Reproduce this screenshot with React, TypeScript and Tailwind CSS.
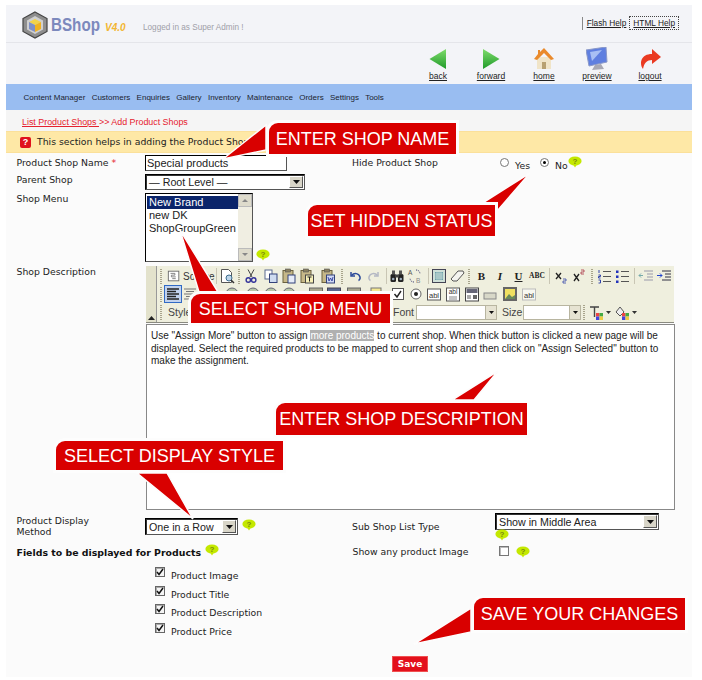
import React from "react";

const verdana = "font-['DejaVu_Sans',sans-serif]";
const arial = "font-['Liberation_Sans',Arial,sans-serif]";

function Help({ className = "" }: { className?: string }) {
  return (
    <svg width="14" height="12" viewBox="0 0 14 12" className={"shrink-0 " + className}>
      <ellipse cx="7" cy="5" rx="6.6" ry="4.6" fill="#c4e800" />
      <path d="M5 8.5 L7 11.5 L9 8.5 Z" fill="#c4e800" />
      <text x="7" y="8" fontSize="8" fontWeight="700" textAnchor="middle" fill="#7a8a10" fontFamily="Liberation Sans">?</text>
    </svg>
  );
}

function Arrow() {
  return (
    <svg width="7" height="4" viewBox="0 0 7 4">
      <path d="M0 0H7L3.5 4Z" fill="#111" />
    </svg>
  );
}

function Drop({ className = "" }: { className?: string }) {
  return (
    <span className={"flex items-center justify-center w-[14px] self-stretch m-[1px] bg-[#d8d5c8] border-t border-l border-white border-r border-b border-r-[#555] border-b-[#555] " + className}>
      <Arrow />
    </span>
  );
}

function Sel({ text, className }: { text: string; className: string }) {
  return (
    <div className={`${arial} flex items-stretch justify-between bg-white border border-t-black border-l-black border-r-[#555] border-b-[#555] shadow-[inset_1px_1px_0_#333] text-[10.7px] leading-[14px] text-[#222] ${className}`}>
      <span className="pl-[3px] self-center whitespace-nowrap">{text}</span>
      <Drop />
    </div>
  );
}

function Label({ children, className = "" }: { children: React.ReactNode; className?: string }) {
  return <div className={`${verdana} text-[9.3px] leading-[11px] text-[#222] ${className}`}>{children}</div>;
}

function Grip({ w = "w-[5px]" }: { w?: string }) {
  return (
    <span className={`${w} flex justify-center shrink-0`}>
      <span className="block w-[2px] h-[15px] bg-[repeating-linear-gradient(to_bottom,#a8a48c_0,#a8a48c_1px,transparent_1px,transparent_2px)]" />
    </span>
  );
}

function Sep({ w = "w-[6px]" }: { w?: string }) {
  return (
    <span className={`${w} flex justify-center shrink-0`}>
      <span className="block w-[1px] h-[16px] bg-[#c9c6b4]" />
    </span>
  );
}

type Kind =
  | "source" | "preview" | "cut" | "copy" | "paste" | "pasteT" | "pasteW" | "undo" | "redo" | "find" | "replace"
  | "all" | "erase" | "sub" | "sup" | "ol" | "ul" | "out" | "in" | "left" | "center" | "box" | "boxBlue" | "check"
  | "radio" | "abl" | "abl2" | "sel" | "btn" | "img" | "abl3" | "doc" | "globe";

function Glyph({ k }: { k: Kind }) {
  const board = (
    <>
      <rect x="2" y="2.5" width="10" height="12" fill="#c6b888" stroke="#6b6240" />
      <rect x="4.5" y="1" width="5" height="3" fill="#8a8060" stroke="#555" strokeWidth=".6" />
    </>
  );
  switch (k) {
    case "source":
      return <><rect x="1.5" y="2.5" width="12" height="11" fill="#fff" stroke="#666" /><path d="M4 5h5v2H5v2h5M6 11h4" stroke="#777" fill="none" /></>;
    case "preview":
      return <><path d="M2.5 1.5h7l3 3v10h-10z" fill="#fff" stroke="#555" /><circle cx="10" cy="10" r="3" fill="#bcd4e8" stroke="#3c6c8c" /><path d="M12 12l3 3" stroke="#333" strokeWidth="1.5" /></>;
    case "cut":
      return <><path d="M5 1.5L9 9M11 1.5L7 9" stroke="#444" fill="none" /><circle cx="5.3" cy="12" r="2.2" fill="none" stroke="#33339a" strokeWidth="1.4" /><circle cx="10.7" cy="12" r="2.2" fill="none" stroke="#33339a" strokeWidth="1.4" /></>;
    case "copy":
      return <><rect x="2" y="2" width="7" height="9" fill="#fff" stroke="#5a6a90" /><rect x="6.5" y="6" width="7.5" height="8.5" fill="#cfdcf0" stroke="#33427a" /></>;
    case "paste":
      return <>{board}<rect x="7" y="7" width="7" height="8" fill="#e6ecf8" stroke="#33427a" /></>;
    case "pasteT":
      return <>{board}<rect x="6.5" y="7" width="8" height="8" fill="#f6f0b8" stroke="#444" /><path d="M8.5 9h4M10.5 9v4.5" stroke="#222" /></>;
    case "pasteW":
      return <>{board}<rect x="6.5" y="7" width="8" height="8" fill="#cfd8f4" stroke="#33427a" /><path d="M8 9l1 4 1.5-3 1.5 3 1-4" stroke="#2a3a9a" fill="none" strokeWidth=".9" /></>;
    case "undo":
      return <><path d="M4 4v4h4" stroke="#2b4a9a" fill="none" strokeWidth="1.5" /><path d="M4.5 7.5C7 4.5 12 5 13 9c.3 1.5-.5 3-1.5 3.5" stroke="#2b4a9a" fill="none" strokeWidth="1.5" /></>;
    case "redo":
      return <><path d="M12 4v4H8" stroke="#b4b8c4" fill="none" strokeWidth="1.5" /><path d="M11.5 7.5C9 4.5 4 5 3 9c-.3 1.5.5 3 1.5 3.5" stroke="#b4b8c4" fill="none" strokeWidth="1.5" /></>;
    case "find":
      return <><rect x="1.5" y="6" width="5.5" height="8" rx="1.5" fill="#222" /><rect x="9" y="6" width="5.5" height="8" rx="1.5" fill="#222" /><rect x="3" y="2.5" width="3" height="4" fill="#555" /><rect x="10" y="2.5" width="3" height="4" fill="#555" /><rect x="6" y="6.5" width="4" height="3" fill="#444" /><circle cx="4.2" cy="11" r="1.3" fill="#9ab" /><circle cx="11.8" cy="11" r="1.3" fill="#9ab" /></>;
    case "replace":
      return <><text x="1" y="7" fontSize="6.5" fontFamily="Liberation Sans" fill="#555">A</text><text x="9" y="14.5" fontSize="6.5" fontFamily="Liberation Sans" fill="#888">B</text><path d="M9 2c3 0 4 2 4 4M7 14c-3 0-4-2-4-4" stroke="#447" fill="none" strokeDasharray="1 1" /></>;
    case "all":
      return <><rect x="1.5" y="1.5" width="13" height="13" fill="#cfe0d8" stroke="#445" /><path d="M4 4h8v8H4z" fill="#6aa0a8" /><path d="M4 6h8M4 8h8M4 10h8M6 4v8M8 4v8M10 4v8" stroke="#e8f0e8" strokeWidth=".6" /></>;
    case "erase":
      return <path d="M2 11l7-8h5l1 2-7 8H4z" fill="#f4f4f0" stroke="#555" />;
    case "sub":
      return <><path d="M3 5l5 6M8 5l-5 6" stroke="#222" strokeWidth="1.3" /><path d="M10 11h3v2h-3v2h3" stroke="#3344aa" fill="none" strokeWidth=".8" /></>;
    case "sup":
      return <><path d="M3 6l5 7M8 6l-5 7" stroke="#222" strokeWidth="1.3" /><path d="M10 2h3v2h-3v2h3" stroke="#aa3344" fill="none" strokeWidth=".8" /></>;
    case "ol":
      return <><path d="M3 2v3M2.5 7h2v1.5h-2V10h2M2.5 12h2v3h-2" stroke="#3344aa" fill="none" /><path d="M7 3.5h8M7 8.5h8M7 13.5h8" stroke="#555" strokeWidth="1.2" /></>;
    case "ul":
      return <><rect x="2" y="2.5" width="2.5" height="2.5" fill="#2233bb" /><rect x="2" y="7.5" width="2.5" height="2.5" fill="#2233bb" /><rect x="2" y="12.5" width="2.5" height="2.5" fill="#2233bb" /><path d="M7 3.5h8M7 8.5h8M7 13.5h8" stroke="#555" strokeWidth="1.2" /></>;
    case "out":
      return <><path d="M6 3h9M9 6h6M9 9h6M6 12h9" stroke="#99a" /><path d="M1 7.5h4M3 5.5l-2 2 2 2" stroke="#7aa" fill="none" /></>;
    case "in":
      return <><path d="M6 3h9M9 6h6M9 9h6M6 12h9" stroke="#334" /><path d="M1 7.5h5M4 5.5l2 2-2 2" stroke="#24c" fill="none" /></>;
    case "left":
      return <path d="M2 3h12M2 5.5h9M2 8h12M2 10.5h9M2 13h12" stroke="#222" strokeWidth="1.4" />;
    case "center":
      return <path d="M2 3h12M4 5.5h8M2 8h12M4 10.5h8M2 13h12" stroke="#777" strokeWidth="1.2" />;
    case "box":
      return <rect x="1.5" y="2" width="13" height="13" fill="#a8a890" stroke="#666" />;
    case "boxBlue":
      return <rect x="1.5" y="2" width="13" height="13" fill="#5a6890" stroke="#445" />;
    case "doc":
      return <rect x="3" y="2" width="10" height="13" fill="#f4e890" stroke="#777" />;
    case "globe":
      return <circle cx="8" cy="8" r="6" fill="#b8c8a8" stroke="#667" />;
    case "check":
      return <><rect x="2.5" y="2.5" width="11" height="11" fill="#fff" stroke="#555" /><path d="M4.5 8l2.5 3 4-6" stroke="#222" fill="none" strokeWidth="1.4" /></>;
    case "radio":
      return <><circle cx="8" cy="8" r="5" fill="#fff" stroke="#666" /><circle cx="8" cy="8" r="2" fill="#222" /></>;
    case "abl":
    case "abl3":
      return <><rect x="1.5" y="3" width="13" height="11" fill={k === "abl" ? "#fff" : "#f8f8f0"} stroke={k === "abl" ? "#555" : "#bbb"} /><text x="8" y="12" fontSize="7.5" textAnchor="middle" fontFamily="Liberation Sans" fill="#333">abl</text></>;
    case "abl2":
      return <><rect x="1.5" y="2" width="13" height="13" fill="#fff" stroke="#555" /><text x="8" y="8" fontSize="6.5" textAnchor="middle" fontFamily="Liberation Sans" fill="#333">abl</text><path d="M4 11h8M4 13h8" stroke="#888" /></>;
    case "sel":
      return <><rect x="1.5" y="2" width="13" height="13" fill="#fff" stroke="#444" /><rect x="2.5" y="3" width="11" height="4" fill="#667" /><rect x="3" y="9" width="4" height="4" fill="#aaa" /><rect x="9" y="9" width="4" height="4" fill="#666" /></>;
    case "btn":
      return <rect x="2" y="7" width="12" height="6" fill="#d8d8c8" stroke="#888" />;
    case "img":
      return <><rect x="1" y="1" width="14" height="14" fill="#666" /><rect x="3" y="3" width="10" height="10" fill="#f0e060" /><path d="M3 13l4-5 3 3 3-2v4z" fill="#6a8a5a" /></>;
  }
}

function Tb({ k, w = "w-[18px]", className = "" }: { k: Kind; w?: string; className?: string }) {
  return (
    <span className={`${w} flex justify-center shrink-0 ${className}`}>
      <svg width="16" height="16" viewBox="0 0 16 16">
        <Glyph k={k} />
      </svg>
    </span>
  );
}

function Fmt({ children, w, className = "text-[11px]" }: { children: React.ReactNode; w: string; className?: string }) {
  return (
    <span className={`${w} flex justify-center shrink-0 font-['Liberation_Serif',serif] font-bold text-[#222] ${className}`}>
      {children}
    </span>
  );
}

function Combo({ w }: { w: string }) {
  return (
    <span className={`${w} h-[15px] flex justify-between bg-white border border-[#b8b5a0] shrink-0`}>
      <span />
      <span className="w-[11px] bg-[#e6e3d2] border-l border-[#b8b5a0] flex items-center justify-center">
        <svg width="5" height="3" viewBox="0 0 5 3"><path d="M0 0h5L2.5 3z" fill="#111" /></svg>
      </span>
    </span>
  );
}

function Toolbar() {
  return (
    <div className="flex bg-[#efefde] h-[57px] w-[528px] border-b border-[#8a8a80]">
      <div className="w-[11px] shrink-0 bg-[#e3e2cc] border-r border-[#999] flex flex-col justify-end items-center pb-[2px]">
        <svg width="7" height="4" viewBox="0 0 7 4"><path d="M0 4h7L3.5 0z" fill="#222" /></svg>
      </div>
      <div className="flex flex-col flex-1 pl-[1px]">
        <div className="flex items-center h-[19px] pt-[1px]">
          <Grip />
          <span className="w-[51px] flex items-center pl-[4px] shrink-0 gap-[2px]">
            <Tb k="source" w="w-[14px]" />
            <span className={`${arial} text-[10px] text-[#333]`}>Source</span>
          </span>
          <Sep w="w-[4px]" />
          <Tb k="preview" />
          <Grip />
          <Tb k="cut" w="w-[20px]" />
          <Tb k="copy" w="w-[19px]" />
          <Tb k="paste" w="w-[17px]" />
          <Tb k="pasteT" w="w-[20px]" />
          <Tb k="pasteW" w="w-[21px]" />
          <Grip w="w-[7px]" />
          <Tb k="undo" w="w-[20px]" />
          <Tb k="redo" />
          <Sep />
          <Tb k="find" w="w-[16px]" />
          <Tb k="replace" w="w-[20px]" />
          <Sep />
          <Tb k="all" w="w-[16px]" />
          <Tb k="erase" w="w-[19px]" />
          <Grip w="w-[6px]" />
          <Fmt w="w-[19px]">B</Fmt>
          <Fmt w="w-[18px]" className="text-[11px] italic">I</Fmt>
          <Fmt w="w-[19px]" className="text-[11px] underline">U</Fmt>
          <Fmt w="w-[18px]" className="text-[7.5px] whitespace-nowrap">ABC</Fmt>
          <Sep />
          <Tb k="sub" />
          <Tb k="sup" />
          <Grip w="w-[7px]" />
          <Tb k="ol" />
          <Tb k="ul" />
          <Sep />
          <Tb k="out" w="w-[17px]" />
          <Tb k="in" w="w-[20px]" />
        </div>
        <div className="flex items-center h-[18px]">
          <Grip />
          <span className="w-[18px] h-[18px] ml-[1px] flex items-center justify-center bg-[#c1d2ee] border border-[#316ac5] shrink-0">
            <svg width="16" height="16" viewBox="0 0 16 16"><Glyph k="left" /></svg>
          </span>
          <Tb k="center" w="w-[16px]" />
          <Tb k="globe" className="ml-[25px]" />
          <Tb k="globe" className="ml-[3px]" />
          <Tb k="globe" />
          <Tb k="globe" />
          <Tb k="box" className="ml-[9px]" />
          <Tb k="boxBlue" />
          <Tb k="box" className="ml-[2px]" />
          <Tb k="doc" className="ml-[4px]" />
          <Tb k="check" className="ml-[4px]" />
          <Tb k="radio" />
          <Tb k="abl" />
          <Tb k="abl2" w="w-[19px]" />
          <Tb k="sel" w="w-[19px]" />
          <Tb k="btn" />
          <Tb k="img" w="w-[21px]" />
          <Tb k="abl3" />
        </div>
        <div className={`${arial} flex items-center h-[19px] text-[10.5px] text-[#444]`}>
          <Grip />
          <span className="ml-[5px] w-[225px] shrink-0">Style</span>
          <span className="w-[23px] shrink-0">Font</span>
          <Combo w="w-[81px]" />
          <span className="w-[26px] pl-[5px] shrink-0">Size</span>
          <Combo w="w-[58px]" />
          <Grip />
          <span className="ml-[3px] w-[25px] shrink-0 flex items-center gap-[1px]">
            <svg width="16" height="16" viewBox="0 0 16 16">
              <path d="M1 2h9M5.5 2v10" stroke="#444" strokeWidth="1.4" />
              <rect x="7" y="8" width="3.5" height="3.5" fill="#e44" /><rect x="10.5" y="8" width="3.5" height="3.5" fill="#4a4" /><rect x="7" y="11.5" width="3.5" height="3.5" fill="#44d" /><rect x="10.5" y="11.5" width="3.5" height="3.5" fill="#ec4" />
            </svg>
            <svg width="5" height="3" viewBox="0 0 5 3"><path d="M0 0h5L2.5 3z" fill="#333" /></svg>
          </span>
          <span className="w-[27px] shrink-0 flex items-center gap-[1px]">
            <svg width="17" height="16" viewBox="0 0 17 16">
              <path d="M2 7l4-5 4 5-4 4z" fill="#eee" stroke="#555" />
              <rect x="8" y="8" width="3.5" height="3.5" fill="#e44" /><rect x="11.5" y="8" width="3.5" height="3.5" fill="#4a4" /><rect x="8" y="11.5" width="3.5" height="3.5" fill="#44d" /><rect x="11.5" y="11.5" width="3.5" height="3.5" fill="#ec4" />
            </svg>
            <svg width="5" height="3" viewBox="0 0 5 3"><path d="M0 0h5L2.5 3z" fill="#333" /></svg>
          </span>
        </div>
      </div>
    </div>
  );
}

function Nav({ label, children }: { label: string; children: React.ReactNode }) {
  return (
    <div className="flex flex-col items-center w-[53px]">
      <div className="h-[25px] flex items-center justify-center">{children}</div>
      <a className={`${arial} mt-[0px] text-[8.5px] leading-[11px] text-[#222] underline`}>{label}</a>
    </div>
  );
}

function Callout({ text, className }: { text: string; className: string }) {
  return (
    <div className={`${arial} absolute flex items-center justify-center bg-[#d90000] text-white text-[18px] leading-none whitespace-nowrap rounded-tl-[9px] ring-[3px] ring-[#fdfdfd] ${className}`}>
      {text}
    </div>
  );
}

function Check({ label }: { label: string }) {
  return (
    <div className="flex h-[18.7px] items-start">
      <span className="w-[10px] h-[10px] mt-[0px] border border-[#666] bg-[#f4f4f4] shadow-[inset_1px_1px_0_#aaa] flex items-center justify-center">
        <svg width="8" height="8" viewBox="0 0 8 8"><path d="M1 4l2 2.5L7 1" stroke="#111" strokeWidth="1.5" fill="none" /></svg>
      </span>
      <Label className="ml-[6px] mt-[3px]">{label}</Label>
    </div>
  );
}

export default function App() {
  return (
    <div className="relative w-[702px] h-[680px] bg-white overflow-hidden">
      <div className="pt-[5px] pl-[6px]">
        <div className="w-[686px] h-[672px] bg-[#fbfbfb] flex flex-col">
          {/* header */}
          <div className="h-[38px] bg-[#f3f4f8] border-b border-[#e4e5ea] flex items-start shrink-0">
            <svg width="26" height="28" viewBox="0 0 26 28" className="ml-[15.5px] mt-[5.5px] shrink-0">
              <path d="M13 1L25 7.5V20.5L13 27L1 20.5V7.5Z" fill="#8e8e8e" stroke="#444" strokeWidth="1.2" />
              <path d="M13 5L21 9.5V18.5L13 23L5 18.5V9.5Z" fill="#d0d0d0" />
              <path d="M13 8L19 11L13 14L7 11Z" fill="#f3d24a" />
              <path d="M7 11L13 14V21L7 18Z" fill="#7f90c8" />
              <path d="M19 11L13 14V21L19 18Z" fill="#f1b220" />
            </svg>
            <span className={`${arial} ml-[3px] mt-[9px] w-[50px] whitespace-nowrap text-[19px] leading-[22px] font-bold text-[#7c89bd] scale-x-[0.8] origin-left`}>BShop</span>
            <span className={`${arial} ml-[4.5px] mt-[16px] w-[20px] whitespace-nowrap text-[10px] leading-[13px] font-bold italic text-[#f2b632]`}>V4.0</span>
            <span className={`${arial} ml-[18px] mt-[17px] text-[8.2px] leading-[12px] text-[#a0a0a8]`}>Logged in as Super Admin !</span>
            <div className={`${arial} ml-auto mr-[13px] mt-[11px] flex items-center text-[8.3px] leading-[12px] text-[#222]`}>
              <span className="border-l border-[#888] pl-[4px] h-[13px] underline">Flash Help</span>
              <span className="ml-[3px] px-[3px] h-[14px] border border-dotted border-[#444] underline">HTML Help</span>
            </div>
          </div>
          {/* nav icons */}
          <div className="h-[41px] bg-[#f3f4f8] flex items-start justify-end pr-[15.5px] pt-[3px] shrink-0">
            <Nav label="back">
              <svg width="18" height="22" viewBox="0 0 18 22">
                <defs><linearGradient id="gb" x1="0" y1="0" x2="0" y2="1"><stop offset="0" stopColor="#7fdc6c" /><stop offset="1" stopColor="#1f9a2a" /></linearGradient></defs>
                <path d="M17 1V21L0.5 11Z" fill="url(#gb)" />
              </svg>
            </Nav>
            <Nav label="forward">
              <svg width="18" height="22" viewBox="0 0 18 22">
                <defs><linearGradient id="gf" x1="0" y1="0" x2="0" y2="1"><stop offset="0" stopColor="#7fdc6c" /><stop offset="1" stopColor="#1f9a2a" /></linearGradient></defs>
                <path d="M1 1V21L17.5 11Z" fill="url(#gf)" />
              </svg>
            </Nav>
            <Nav label="home">
              <svg width="20" height="23" viewBox="0 0 20 23">
                <path d="M3 10H17V22H3Z" fill="#f0e4c8" />
                <path d="M10 1L20 12L17 13L10 6L3 13L0 12L4 7V3H6V5Z" fill="#ea8a2c" />
                <path d="M8 15H12V22H8Z" fill="#b8a070" />
              </svg>
            </Nav>
            <Nav label="preview">
              <svg width="22" height="24" viewBox="0 0 22 24">
                <path d="M0 3L20 0L21 15L3 19Z" fill="#5f7fe0" stroke="#8a98c8" />
                <path d="M4 5L16 3L6 14Z" fill="#a8c0f4" />
                <path d="M9 18L15 17L18 22L6 23Z" fill="#a8a8b4" />
              </svg>
            </Nav>
            <Nav label="logout">
              <svg width="22" height="22" viewBox="0 0 22 22">
                <path d="M13 1L22 9L13 16V12C8 12 5 15 4 21C0 15 2 6 13 6Z" fill="#ea3a22" />
              </svg>
            </Nav>
          </div>
          {/* menu */}
          <div className={`${arial} h-[26px] bg-[#99bdf1] flex items-center gap-[6.3px] pl-[17.5px] pt-[2px] text-[8px] text-[#1c2430] shrink-0`}>
            {["Content Manager", "Customers", "Enquiries", "Gallery", "Inventory", "Maintenance", "Orders", "Settings", "Tools"].map((m) => (
              <span key={m}>{m}</span>
            ))}
          </div>
          {/* crumb */}
          <div className={`${arial} h-[21px] bg-[#f5f5f5] pl-[16px] pt-[6px] text-[8.9px] leading-[12px] text-[#e5222e] shrink-0`}>
            <span className="underline">List Product Shops </span>&gt;&gt; Add Product Shops
          </div>
          {/* notice */}
          <div className="h-[22px] bg-[#fee8a6] border-y border-[#fbe09a] flex items-center pl-[14px] shrink-0">
            <span className={`${arial} w-[11px] h-[11px] rounded-[2px] bg-[#e0101c] text-white text-[9px] leading-[11px] font-bold text-center`}>?</span>
            <span className={`${verdana} ml-[6px] text-[9.3px] text-[#222] whitespace-nowrap`}>This section helps in adding the Product Shop</span>
          </div>
          {/* form */}
          <div className="flex flex-col pl-[10.5px] pt-[2px]">
            <div className="flex h-[19px]">
              <Label className="w-[128.5px] pt-[2px]">
                Product Shop Name <span className="text-[#e5222e]">*</span>
              </Label>
              <div className="w-[207px]">
                <div className={`${arial} w-[142px] h-[16px] bg-white border border-t-black border-l-black border-r-[#555] border-b-[#555] text-[11px] leading-[14px] text-[#222] pl-[1px]`}>
                  Special products
                </div>
              </div>
              <Label className="w-[148px] pt-[2px]">Hide Product Shop</Label>
              <div className="flex items-start">
                <span className="mt-[3px] w-[9px] h-[9px] rounded-full border border-[#777] bg-white" />
                <Label className="ml-[6px] mt-[5px] w-[25px]">Yes</Label>
                <span className="mt-[3px] w-[9px] h-[9px] rounded-full border border-[#777] bg-white flex items-center justify-center">
                  <span className="w-[3px] h-[3px] rounded-full bg-black" />
                </span>
                <Label className="ml-[6px] mt-[5px] w-[13px]">No</Label>
                <Help className="mt-[1px]" />
              </div>
            </div>
            <div className="flex h-[19px]">
              <Label className="w-[128.5px]">Parent Shop</Label>
              <Sel text="— Root Level —" className="w-[160px] h-[16px]" />
            </div>
            <div className="flex h-[73px]">
              <Label className="w-[128.5px]">Shop Menu</Label>
              <div className={`${arial} relative w-[108px] h-[69px] bg-white border border-t-black border-l-black border-r-[#555] border-b-[#555] text-[11px] leading-[13px] text-[#222] flex`}>
                <div className="flex-1 pl-[1px] pt-[2px]">
                  <div className="bg-[#0a246a] text-white pl-[2px]">New Brand</div>
                  <div className="pl-[2px]">new DK</div>
                  <div className="pl-[2px]">ShopGroupGreen</div>
                </div>
                <div className="w-[14px] bg-[#f0eee2] flex flex-col justify-between">
                  <span className="h-[13px] bg-[#dedbcc] border border-[#bbb] flex items-center justify-center">
                    <svg width="6" height="3" viewBox="0 0 6 3"><path d="M0 3h6L3 0z" fill="#888" /></svg>
                  </span>
                  <span className="h-[13px] bg-[#dedbcc] border border-[#bbb] flex items-center justify-center">
                    <svg width="6" height="3" viewBox="0 0 6 3"><path d="M0 0h6L3 3z" fill="#888" /></svg>
                  </span>
                </div>
              </div>
              <Help className="ml-[3px] mt-[56px]" />
            </div>
            <div className="flex h-[247px]">
              <Label className="w-[129.5px]">Shop Description</Label>
              <div className="flex flex-col">
                <Toolbar />
                <div className={`${arial} mt-[1px] w-[529px] h-[186px] bg-white border border-[#888] px-[4px] pt-[5px] text-[10px] leading-[12.5px] text-[#222]`}>
                  Use "Assign More" button to assign <span className="bg-[#b0b0b0] text-white">more products</span> to current shop. When thick button is clicked a new page will be displayed. Select the required products to be mapped to current shop and then click on "Assign Selected" button to make the assignment.
                </div>
              </div>
            </div>
            <div className="flex h-[33px]">
              <Label className="w-[128.5px] pt-[2px]">
                Product Display<br />Method
              </Label>
              <div className="w-[207px] flex items-start pt-[5px]">
                <Sel text="One in a Row" className="w-[93px] h-[17px]" />
                <Help className="ml-[4px] mt-[1px]" />
              </div>
              <Label className="w-[143px] pt-[8px]">Sub Shop List Type</Label>
              <div className="flex flex-col">
                <Sel text="Show in Middle Area" className="w-[164px] h-[17px]" />
                <Help className="-mt-[1px]" />
              </div>
            </div>
            <div className="flex h-[21px] items-start">
              <div className={`${verdana} w-[188.5px] pt-[1px] text-[9.4px] leading-[11px] font-bold text-[#111] whitespace-nowrap`}>Fields to be displayed for Products</div>
              <Help className="-mt-[2px]" />
              <Label className="ml-[133.5px] w-[146px]">Show any product Image</Label>
              <span className="w-[10px] h-[10px] border border-[#777] bg-white shadow-[inset_1px_1px_0_#bbb]" />
              <Help className="ml-[7px]" />
            </div>
            <div className="pl-[138.5px] flex flex-col">
              <Check label="Product Image" />
              <Check label="Product Title" />
              <Check label="Product Description" />
              <Check label="Product Price" />
            </div>
            <div className={`${verdana} self-start ml-[375.5px] mt-[14px] w-[36px] h-[16px] bg-[#e3101c] border border-[#f05050] text-white text-[9px] leading-[14px] font-bold text-center`}>
              Save
            </div>
          </div>
        </div>
      </div>

      {/* annotation overlay */}
      <svg width="702" height="680" className="absolute left-0 top-0 pointer-events-none">
        <g fill="#d90000" stroke="#fdfdfd" strokeWidth="1.5">
          <path d="M266 125L223 159L266 150Z" />
          <path d="M530 173L484 202L498 210Z" />
          <path d="M180 230L199 292L218 292Z" />
          <path d="M498 371L452 400L474 400Z" />
          <path d="M193 519L137 473L167 473Z" />
          <path d="M414 644L471 608L471 632Z" />
        </g>
      </svg>
      <Callout text="ENTER SHOP NAME" className="left-[269px] top-[123px] w-[187px] h-[31px]" />
      <Callout text="SET HIDDEN STATUS" className="left-[308px] top-[205px] w-[187px] h-[31px]" />
      <Callout text="SELECT SHOP MENU" className="left-[191px] top-[294px] w-[199px] h-[29px]" />
      <Callout text="ENTER SHOP DESCRIPTION" className="left-[276px] top-[403px] w-[251px] h-[32px]" />
      <Callout text="SELECT DISPLAY STYLE" className="left-[56px] top-[441px] w-[227px] h-[29px]" />
      <Callout text="SAVE YOUR CHANGES" className="left-[474px] top-[598px] w-[211px] h-[32px]" />
    </div>
  );
}
